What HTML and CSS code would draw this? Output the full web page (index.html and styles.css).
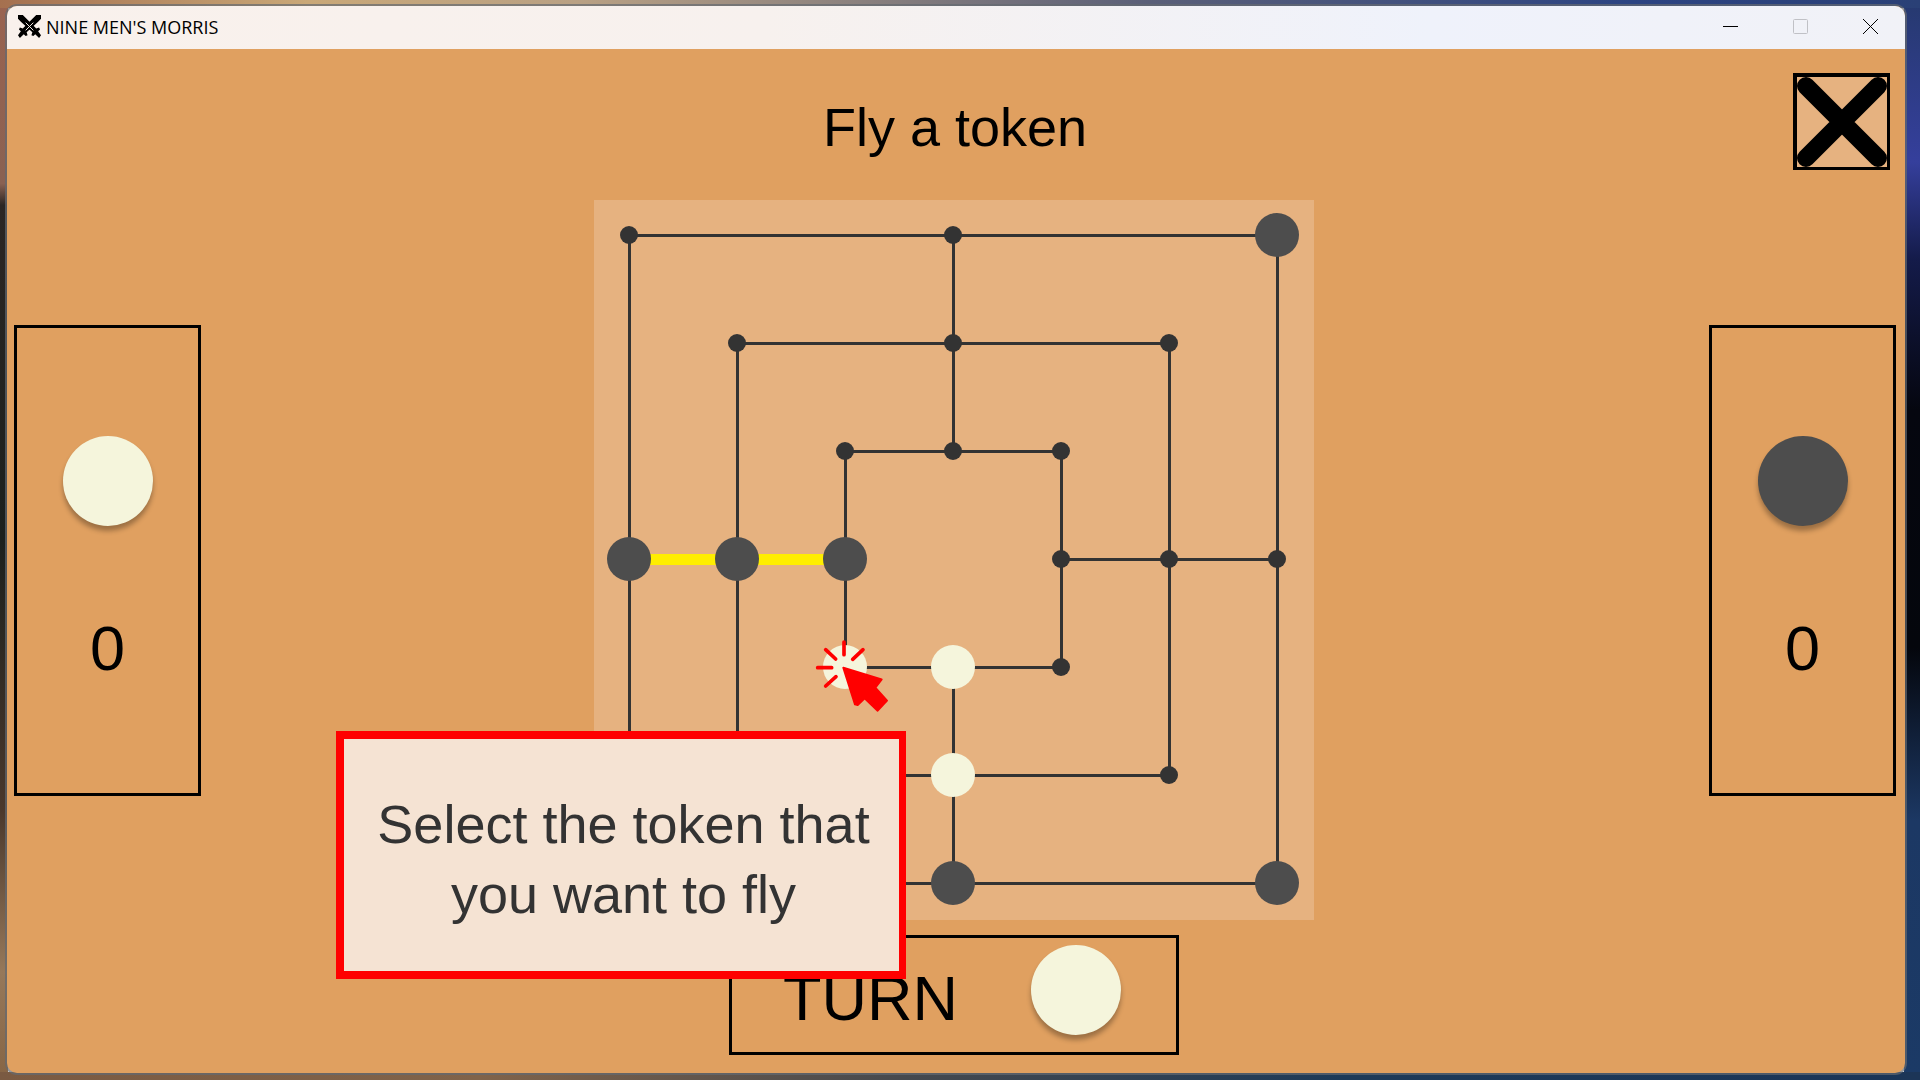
FILE: index.html
```html
<!DOCTYPE html>
<html lang="en">
<head>
<meta charset="utf-8">
<title>Nine Men's Morris</title>
<link rel="stylesheet" href="styles.css">
</head>
<body>
<div class="window">
  <header class="titlebar">
    <svg class="app-icon" viewBox="0 0 24 24" aria-hidden="true">
      <path d="M0 0H5L17 12L19 14L22 13L23 15L21 17L24 21L22 24L18 20L16 22L14 21L15 18L3 7L0 4Z"/>
      <path d="M24 0H19L7 12L5 14L2 13L1 15L3 17L0 21L2 24L6 20L8 22L10 21L9 18L21 7L24 4Z"/>
      <path class="blade-line" d="M8 8L16 16M16 8L8 16"/>
    </svg>
    <span class="app-name">NINE MEN'S MORRIS</span>
    <div class="window-controls">
      <button type="button" aria-label="Minimize"><svg viewBox="0 0 15 15"><path d="M0 7.500H15"/></svg></button>
      <button type="button" aria-label="Maximize" disabled><svg viewBox="0 0 15 15"><rect x=".5" y=".5" width="14" height="14" rx="1"/></svg></button>
      <button type="button" aria-label="Close window"><svg viewBox="0 0 15 15"><path d="M0 0L15 15M15 0L0 15"/></svg></button>
    </div>
  </header>

  <main class="game">
    <section class="player player-one" aria-label="White player">
      <span class="piece piece-white"></span>
      <span class="count">0</span>
    </section>

    <div class="table">
      <h1 class="title">Fly a token</h1>
      <div class="board-area">
        <svg class="board" viewBox="0 0 720 720" role="img" aria-label="Board">
          <g class="lines">
            <rect x="35.500" y="35.500" width="648" height="648"/>
            <rect x="143.500" y="143.500" width="432" height="432"/>
            <rect x="251.500" y="251.500" width="216" height="216"/>
            <path d="M359.500 35V251M359.500 467V683M35 359.500H251M467 359.500H683"/>
          </g>
          <path class="mill" d="M35 359.500H251"/>
          <g class="points">
            <circle cx="35" cy="35" r="9"/><circle cx="359" cy="35" r="9"/>
            <circle cx="143" cy="143" r="9"/><circle cx="359" cy="143" r="9"/><circle cx="575" cy="143" r="9"/>
            <circle cx="251" cy="251" r="9"/><circle cx="359" cy="251" r="9"/><circle cx="467" cy="251" r="9"/>
            <circle cx="467" cy="359" r="9"/><circle cx="575" cy="359" r="9"/><circle cx="683" cy="359" r="9"/>
            <circle cx="467" cy="467" r="9"/><circle cx="143" cy="575" r="9"/><circle cx="575" cy="575" r="9"/>
            <circle cx="35" cy="683" r="9"/>
          </g>
          <g class="black">
            <circle cx="683" cy="35" r="22"/><circle cx="35" cy="359" r="22"/><circle cx="143" cy="359" r="22"/>
            <circle cx="251" cy="359" r="22"/><circle cx="359" cy="683" r="22"/><circle cx="683" cy="683" r="22"/>
          </g>
          <g class="white">
            <circle cx="251" cy="467" r="22"/><circle cx="359" cy="467" r="22"/><circle cx="359" cy="575" r="22"/>
          </g>
          <svg class="pointer" x="196" y="400" width="200" height="140" viewBox="0 0 600 420">
            <path class="arrow" d="M160 203L275 238L256 263L291 302L263 332L224 295L203 315L195 313Z"/>
            <path class="rays" d="M162 126V164M107 149L137 177M219 149L188 178M83 203H125M107 258L138 230"/>
          </svg>
        </svg>
        <div class="hint" role="tooltip">Select the token that you want to fly</div>
      </div>
      <div class="turn">
        <span class="turn-label">TURN</span>
        <span class="piece piece-white"></span>
      </div>
    </div>

    <section class="player player-two" aria-label="Black player">
      <span class="piece piece-black"></span>
      <span class="count">0</span>
    </section>
    <button class="quit" type="button" aria-label="Quit game">
      <svg viewBox="0 0 90 90"><path d="M9 9L81 81M81 9L9 81"/></svg>
    </button>
  </main>
</div>
</body>
</html>
```
FILE: styles.css
```css
* {
  box-sizing: border-box;
}

body {
  display: flex;
  min-height: 100vh;
  margin: 0;
  padding: 6px 15px 7px 7px;
  font-family: "Liberation Sans", Arial, sans-serif;
  color: #000;
  background:
    linear-gradient(90deg, #a5704f, #c9a878 16%, #b9a184 30%, #5a5f78 60%, #2c4482 85%, #2a4076) top / 100% 8px no-repeat,
    linear-gradient(90deg, #7a5a42, #80634a 25%, #46494e 47%, #1d3a58 70%, #1c3557) bottom / 100% 8px no-repeat,
    linear-gradient(180deg, #9a6350, #8a6152 17%, #2b2624 19%, #1c201d 50%, #4a382c 75%, #96785a 90%, #866444) left / 8px 100% no-repeat,
    linear-gradient(180deg, #26396f, #353f9c 15%, #141b4a 24%, #05060f 38%, #04060c 60%, #1c3864 76%, #1b3a66) right / 16px 100% no-repeat;
}

.window {
  display: flex;
  flex: 1;
  flex-direction: column;
  overflow: hidden;
  border-radius: 10px;
  background: #e0a060;
  box-shadow: 0 0 0 2px rgba(100, 105, 112, 0.7);
}

.titlebar {
  display: flex;
  align-items: center;
  height: 43px;
  padding: 0 19px 2px 11px;
  background: linear-gradient(90deg, #f9f1ec, #f7f1ee 40%, #eff2fb 75%, #f1f2f7);
}

.app-icon {
  width: 23px;
  height: 23px;
}

.blade-line {
  fill: none;
  stroke: #f9f1ec;
  stroke-width: 1;
}

.app-name {
  flex: 1;
  padding-left: 5px;
  font: 18px/24px "Open Sans", "Segoe UI", sans-serif;
}

.window-controls {
  display: flex;
  gap: 39px;
}

.window-controls button {
  display: flex;
  padding: 8px;
  border: 0;
  background: none;
}

.window-controls svg {
  width: 15px;
  height: 15px;
  fill: none;
  stroke: #000;
  stroke-width: 1;
}

.window-controls button:disabled svg {
  stroke: #c0c1c6;
}

.game {
  display: grid;
  flex: 1;
  grid-template-columns: 187px 1fr 187px;
  padding: 0 9px 0 7px;
}

.player {
  display: flex;
  grid-row: 1;
  flex-direction: column;
  align-items: center;
  align-self: center;
  gap: 84px;
  height: 471px;
  margin-bottom: 2px;
  padding-top: 108px;
  border: 3px solid #000;
}

.player-one {
  grid-column: 1;
}

.player-two {
  grid-column: 3;
}

.piece {
  width: 90px;
  height: 90px;
  border-radius: 50%;
  box-shadow: 0 5px 5px rgba(0, 0, 0, 0.3);
}

.piece-white {
  background: #f5f5dc;
}

.piece-black {
  background: #4d4d4d;
}

.count,
.turn-label {
  font-size: 63px;
  line-height: 76px;
}

.table {
  display: flex;
  grid-row: 1;
  grid-column: 2;
  flex-direction: column;
  align-items: center;
  padding-right: 2px;
}

.title {
  margin: 0;
  padding: 43px 0 38px 2px;
  font-size: 54px;
  font-weight: 400;
  line-height: 70px;
}

.board-area {
  position: relative;
  width: 720px;
}

.board {
  display: block;
  width: 100%;
  background: #e6b280;
}

.lines {
  fill: none;
  stroke: #333;
  stroke-width: 3;
  shape-rendering: crispEdges;
}

.mill {
  stroke: #fe0;
  stroke-width: 11;
}

.points {
  fill: #333;
}

.black {
  fill: #4d4d4d;
}

.white {
  fill: #f5f5dc;
}

.arrow {
  fill: #f00;
  stroke: #f00;
  stroke-width: 6;
  stroke-linejoin: round;
}

.rays {
  fill: none;
  stroke: #f00;
  stroke-width: 11;
  stroke-linecap: round;
}

.hint {
  position: absolute;
  top: 531px;
  left: -258px;
  width: 570px;
  padding: 50px 22px 42px 26px;
  border: 8px solid #f00;
  border-right-width: 7px;
  background: #f5e3d3;
  color: #333;
  font-size: 54px;
  line-height: 70px;
  text-align: center;
}

.turn {
  display: flex;
  justify-content: space-between;
  width: 450px;
  height: 120px;
  margin: 15px 0 18px;
  padding: 7px 55px 0 51px;
  border: 3px solid #000;
}

.turn-label {
  padding-top: 15px;
}

.quit {
  display: flex;
  grid-row: 1;
  grid-column: 3;
  align-self: start;
  justify-self: end;
  width: 97px;
  height: 97px;
  margin: 24px 6px 0 0;
  padding: 0;
  border: solid #000;
  border-width: 4px 3px 3px 4px;
  background: #e6b280;
}

.quit svg {
  width: 100%;
  height: 100%;
  fill: none;
  stroke: #000;
  stroke-width: 18;
  stroke-linecap: round;
}
```
